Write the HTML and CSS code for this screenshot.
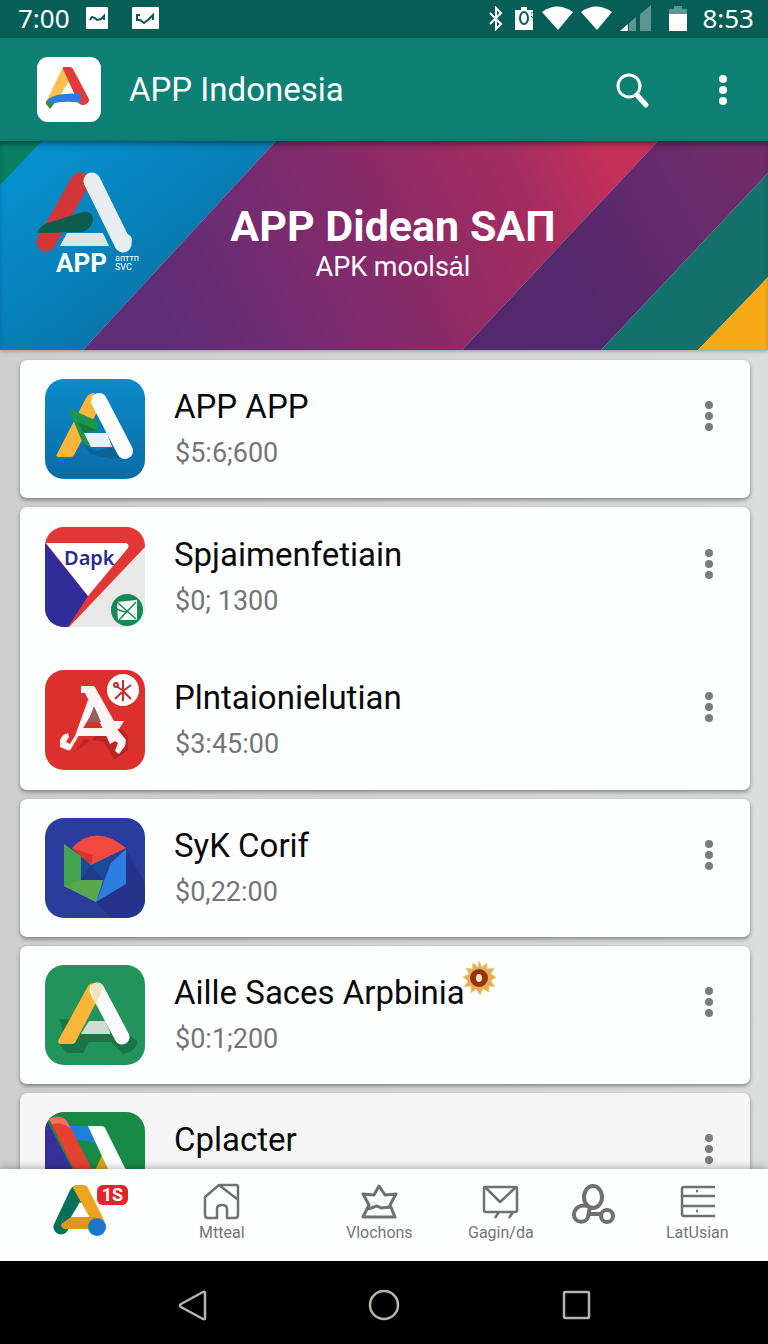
FILE: index.html
```
<!DOCTYPE html>
<html lang="id">
<head>
    <meta charset="UTF-8">
    <meta name="viewport" content="width=device-width, initial-scale=1.0">
    <title>APP Indonesia</title>
    <link rel="stylesheet" href="styles.css">
</head>
<body>
    <div class="phone">
        <div class="status-bar">
            <div class="status-left">
                <span>7:00</span>
                <svg width="22" height="22" viewBox="0 0 22 22"><rect width="22" height="22" rx="1" fill="#fff"/><path d="M4 13l2-3 3 1 2 2 4-1 3-3v4" fill="none" stroke="#075e56" stroke-width="2"/></svg>
                <svg class="status-pic" width="27" height="22" viewBox="0 0 27 22"><rect width="27" height="22" rx="1" fill="#fff"/><path d="M8 8H5v5l3 0 4 3 5-4 4-4v5" fill="none" stroke="#075e56" stroke-width="2"/></svg>
            </div>
            <div class="status-right">
                <svg width="14" height="25" viewBox="0 0 14 25"><path d="M1 7l11 11-5 5V2l5 5L1 18" fill="none" stroke="#fff" stroke-width="2"/></svg>
                <svg class="status-sync" width="20" height="25" viewBox="0 0 20 25"><path d="M0 4h6V1h6v3h6v20H0z" fill="#fff"/><ellipse cx="9" cy="12" rx="4" ry="6" fill="none" stroke="#075e56" stroke-width="2"/><path d="M16 7c3-1 4 0 4 2M16 10l3 3" fill="none" stroke="#075e56" stroke-width="1"/></svg>
                <svg width="31" height="24" viewBox="0 0 31 24"><path d="M0 6Q15-5 31 6L16 24z" fill="#fff"/></svg>
                <svg class="status-wifi" width="31" height="24" viewBox="0 0 31 24"><path d="M0 6Q15-5 31 6L16 24z" fill="#fff"/></svg>
                <svg class="status-signal" width="32" height="26" viewBox="0 0 32 26"><path d="M0 26L8 19v7z" fill="#fff"/><path d="M9 18l7-6v14H9zM20 9L31 0v26H20z" fill="#5c9690"/></svg>
                <svg width="18" height="25" viewBox="0 0 18 25"><path d="M0 3h5V0h8v3h5v5H0z" fill="#5c9690"/><path d="M0 8h18v17H0z" fill="#fff"/></svg>
                <span class="status-time">8:53</span>
            </div>
        </div>

        <header class="app-bar">
            <div class="app-logo">
                <svg width="64" height="65" viewBox="0 0 64 65">
                    <path d="M26 10l6 14-12 20-7 6-4-5z" fill="#fbc04d"/>
                    <path d="M26 10h7q2 0 3 2l16 30c1 5-8 9-11 3L26 12z" fill="#e5393b"/>
                    <path d="M9 44l8-2v5l-4 5-4-5z" fill="#3b8e2e"/>
                    <path d="M10 43q9-8 35-6-3 4-1 9-15-3-31 1z" fill="#2f7bd9"/>
                </svg>
            </div>
            <h1>APP Indonesia</h1>
            <button class="icon-btn search-btn" aria-label="Search">
                <svg width="36" height="38" viewBox="0 0 36 38" fill="none" stroke="#fff" stroke-linecap="round"><circle cx="14" cy="15" r="11" stroke-width="3"/><path d="M22 24l9 10" stroke-width="5"/></svg>
            </button>
            <button class="icon-btn menu-btn" aria-label="More options">
                <svg width="8" height="30" viewBox="0 0 8 30" fill="#fff"><circle cx="4" cy="4" r="4"/><circle cx="4" cy="15" r="4"/><circle cx="4" cy="26" r="4"/></svg>
            </button>
        </header>

        <section class="banner">
            <svg class="banner-bg" viewBox="0 0 768 209" preserveAspectRatio="none">
                <defs>
                    <linearGradient id="bgBlue" x1="0" y1="0" x2="1" y2="1"><stop offset="0" stop-color="#0595d6"/><stop offset="1" stop-color="#0b6693"/></linearGradient>
                    <linearGradient id="bgPink" gradientUnits="userSpaceOnUse" x1="180" y1="200" x2="610" y2="10"><stop offset="0" stop-color="#5f2d78"/><stop offset="0.5" stop-color="#8a2a68"/><stop offset="0.8" stop-color="#a42d60"/><stop offset="1" stop-color="#c5305a"/></linearGradient>
                    <linearGradient id="bgPurple" gradientUnits="userSpaceOnUse" x1="560" y1="130" x2="740" y2="30"><stop offset="0" stop-color="#53286f"/><stop offset="1" stop-color="#702b68"/></linearGradient>
                </defs>
                <path d="M0 0h276L83 209H0z" fill="url(#bgBlue)"/>
                <path d="M0 0h42L0 44z" fill="#087f61"/>
                <path d="M276 0h382L462 209H83z" fill="url(#bgPink)"/>
                <path d="M658 0h110v32L601 209H462z" fill="url(#bgPurple)"/>
                <path d="M768 32v104l-70 73h-97z" fill="#14706a"/>
                <path d="M768 136v73h-70z" fill="#f6aa18"/>
            </svg>
            <div class="banner-logo">
                <svg width="104" height="82" viewBox="0 0 104 82">
                    <path d="M45 10L11 70" stroke="#d23639" stroke-width="19" stroke-linecap="round"/>
                    <path d="M32 61h36l6 13H25z" fill="#dce6ea"/>
                    <path d="M57 9l31 63" stroke="#e7edef" stroke-width="17" stroke-linecap="round"/>
                    <circle cx="91" cy="68" r="6" fill="#e7edef"/>
                    <path d="M2 60q3-6 11-9l35-11c14-2 13 16-1 20L3 61z" fill="#0a5c4b"/>
                </svg>
                <div class="banner-caption"><b>APP</b><small>апттп<br>SVC</small></div>
            </div>
            <div class="banner-text">
                <h2>APP Didean SAП</h2>
                <p>APK moolsȧl</p>
            </div>
        </section>

        <main class="app-list">
            <section class="card">
                <article class="app-row">
                    <svg class="app-icon" viewBox="0 0 100 100">
                        <defs><linearGradient id="g1" x1="0" y1="0" x2="0" y2="1"><stop offset="0" stop-color="#0a8bc9"/><stop offset="1" stop-color="#0a6ca6"/></linearGradient></defs>
                        <rect width="100" height="100" rx="19" fill="url(#g1)"/>
                        <path d="M38 63l12 9 17-4 8 10-8 2-22-5z" fill="#0a6399"/>
                        <path d="M12 75l29-56q3-5 8-5l9 8-29 54q-1 2-4 2H14q-4 0-2-3z" fill="#fbb53a"/>
                        <path d="M23 29l27 12q5 2 3 10l-14 3 8 14q-8-1-11-8l-7-17z" fill="#1f944e"/>
                        <path d="M32 43l20 8-13 3z" fill="#167a3f"/>
                        <path d="M39 54h23l5 14H46z" fill="#e9f0f7"/>
                        <path d="M54 22l26 50" stroke="#fafafa" stroke-width="16" stroke-linecap="round"/>
                    </svg>
                    <div class="app-info">
                        <h3>APP APP</h3>
                        <p>$5:6;600</p>
                    </div>
                    <button class="icon-btn more-btn" aria-label="More"><svg width="8" height="30" viewBox="0 0 8 30"><circle cx="4" cy="4" r="4"/><circle cx="4" cy="15" r="4"/><circle cx="4" cy="26" r="4"/></svg></button>
                </article>
            </section>

            <section class="card card-group">
                <article class="app-row">
                    <svg class="app-icon" viewBox="0 0 100 100">
                        <defs><clipPath id="round"><rect width="100" height="100" rx="19"/></clipPath></defs>
                        <g clip-path="url(#round)">
                            <rect width="100" height="100" fill="#e8e8e8"/>
                            <path d="M0 0h100v20L24 100H0z" fill="#e23735"/>
                            <path d="M0 16l43 53-20 31H0z" fill="#312d98"/>
                            <path d="M1 16h78q6 0 4 5L43 69z" fill="#fff"/>
                        </g>
                        <text x="19" y="38" class="icon-text">Dapk</text>
                        <circle cx="82" cy="83" r="16" fill="#168a50"/>
                        <path d="M72 75l20-2v20H73z" fill="#fff"/>
                        <path d="M72 75l19 17M91 75L74 93M72 82q8 4 11 2" stroke="#168a50" stroke-width="1.5" fill="none"/>
                    </svg>
                    <div class="app-info">
                        <h3>Spjaimenfetiain</h3>
                        <p>$0; 1300</p>
                    </div>
                    <button class="icon-btn more-btn" aria-label="More"><svg width="8" height="30" viewBox="0 0 8 30"><circle cx="4" cy="4" r="4"/><circle cx="4" cy="15" r="4"/><circle cx="4" cy="26" r="4"/></svg></button>
                </article>
                <article class="app-row">
                    <svg class="app-icon" viewBox="0 0 100 100">
                        <rect width="100" height="100" rx="19" fill="#dc302e"/>
                        <path d="M30 82l9-13 20 3 10 18 14-10V66l-5-6-16-2z" fill="#b92625"/>
                        <g fill="#fbf6f5">
                            <path d="M36 16h12q2 0 3 3l18 32h10l-5 8h-2l9 11-1 6-6 8-4-3 3-8-3-2-5 3-5-11-20-40h-4z"/>
                            <path d="M43 30l7 8-20 34-4 7q-1 2-4 1l-7-3v-7l3-5 5-2 1 4-3 5 4 2 5-8z"/>
                            <path d="M36 58h23l3 8H32z"/>
                        </g>
                        <path d="M49 36l7 16H43z" fill="#94605f"/>
                        <circle cx="78" cy="20" r="16" fill="#fff"/>
                        <g stroke="#c92b2e" stroke-width="2" fill="none"><path d="M78 10v21M78 21l8-6M78 21l8 8M77 22l-7 7M77 20l-6-4"/><circle cx="71" cy="15" r="2"/></g>
                    </svg>
                    <div class="app-info">
                        <h3>Plntaionielutian</h3>
                        <p>$3:45:00</p>
                    </div>
                    <button class="icon-btn more-btn" aria-label="More"><svg width="8" height="30" viewBox="0 0 8 30"><circle cx="4" cy="4" r="4"/><circle cx="4" cy="15" r="4"/><circle cx="4" cy="26" r="4"/></svg></button>
                </article>
            </section>

            <section class="card">
                <article class="app-row">
                    <svg class="app-icon" viewBox="0 0 100 100">
                        <rect width="100" height="100" rx="19" fill="#2b3d9c"/>
                        <path d="M81 31l19 34v18Q98 99 81 100H66L50 83z" fill="#25348a"/>
                        <path d="M36 38h30l-8 24H36z" fill="#174c96"/>
                        <path d="M36 62l10-15 12 15z" fill="#1c3d86"/>
                        <path d="M19 26l17 12v24h22l-7 22-32-16z" fill="#43a352"/>
                        <path d="M19 68l17-6h22l-7 22z" fill="#5aa84e"/>
                        <path d="M27 30q23-25 54 0L46 47z" fill="#f2493e"/>
                        <path d="M27 30l21 7-2 10z" fill="#d93432"/>
                        <path d="M81 31v35L51 84l15-39z" fill="#2b7fe0"/>
                    </svg>
                    <div class="app-info">
                        <h3>SyK Corif</h3>
                        <p>$0,22:00</p>
                    </div>
                    <button class="icon-btn more-btn" aria-label="More"><svg width="8" height="30" viewBox="0 0 8 30"><circle cx="4" cy="4" r="4"/><circle cx="4" cy="15" r="4"/><circle cx="4" cy="26" r="4"/></svg></button>
                </article>
            </section>

            <section class="card">
                <article class="app-row">
                    <svg class="app-icon" viewBox="0 0 100 100">
                        <rect width="100" height="100" rx="19" fill="#22935a"/>
                        <path d="M14 54h14l-9 13zM15 80l7 8h16l6-11h22l12 12q14-3 14-13l-10-7-36-6z" fill="#177546"/>
                        <path d="M44 56h16l6 13H36z" fill="#cfdcd6"/>
                        <path d="M14 74l29-53q2-3 5-3l10 6-27 52q-1 3-4 3H16q-4 0-2-5z" fill="#fbb537"/>
                        <path d="M52 25l25 47" stroke="#fafafa" stroke-width="15" stroke-linecap="round"/>
                        <path d="M45 21q3-3 7-3 7 0 6 5l-7 17z" fill="#f1e2c2"/>
                    </svg>
                    <div class="app-info">
                        <h3>Aille Saces Arpbinia
                            <svg class="sun" width="34" height="34" viewBox="0 0 34 34"><path d="M17 0l3 6 5-4v6l7-1-3 6 5 3-5 4 4 6-6-1v6l-6-3-3 6-4-6-5 4v-7l-7 1 4-6-5-4 6-3-3-6 6 1 1-6 5 4z" fill="#e3ae58" stroke="#f3cf8c" stroke-width="1"/><circle cx="17" cy="17" r="9" fill="#98330d"/><ellipse cx="17" cy="17" rx="3" ry="4" fill="#fbe9c0"/></svg>
                        </h3>
                        <p>$0:1;200</p>
                    </div>
                    <button class="icon-btn more-btn" aria-label="More"><svg width="8" height="30" viewBox="0 0 8 30"><circle cx="4" cy="4" r="4"/><circle cx="4" cy="15" r="4"/><circle cx="4" cy="26" r="4"/></svg></button>
                </article>
            </section>

            <section class="card card-last">
                <article class="app-row">
                    <svg class="app-icon" viewBox="0 0 100 100">
                        <g clip-path="url(#round)">
                            <rect width="100" height="100" fill="#178a45"/>
                            <path d="M0 5l50 95H0z" fill="#382f9b"/>
                            <path d="M23 14h20l8 18q-8-4-21-4z" fill="#1c7fdc"/>
                            <path d="M57 43L40 82l28-16z" fill="#dfa41c"/>
                            <path d="M43 14h13q3 0 4 2l42 84H83z" fill="#fff"/>
                            <path d="M4 7q13-6 19 4l46 89H50z" fill="#e8402f"/>
                            <path d="M4 7q13-6 19 4l3 6q-8-7-19-5z" fill="#f0745c"/>
                        </g>
                    </svg>
                    <div class="app-info">
                        <h3>Cplacter</h3>
                    </div>
                    <button class="icon-btn more-btn" aria-label="More"><svg width="8" height="30" viewBox="0 0 8 30"><circle cx="4" cy="4" r="4"/><circle cx="4" cy="15" r="4"/><circle cx="4" cy="26" r="4"/></svg></button>
                </article>
            </section>
        </main>

        <nav class="tab-bar">
            <a href="#" class="tab tab-logo" aria-label="Start">
                <svg width="54" height="54" viewBox="0 0 54 54">
                    <path d="M24 10L8 44" stroke="#08705a" stroke-width="15" stroke-linecap="round"/>
                    <path d="M20 5q0-3 4-3h6q4 0 5 3l17 34-10 5z" fill="#eca51f"/>
                    <path d="M27 19l8 15H18z" fill="#fff"/>
                    <path d="M18 34h25l-8 12H11q-6-4 0-7z" fill="#dd971f"/>
                    <circle cx="44" cy="44" r="9" fill="#1976cc"/>
                </svg>
                <span class="badge">1S</span>
            </a>
            <a href="#" class="tab">
                <svg width="37" height="37" viewBox="0 0 37 37"><path d="M2 14L16 2h17q2 0 2 2v28q0 3-3 3h-8V26q0-4-5-4t-5 4v9H5q-3 0-3-3zM16 2l18 14"/></svg>
                <span>Mtteal</span>
            </a>
            <a href="#" class="tab">
                <svg width="37" height="37" viewBox="0 0 37 37"><path d="M18 3l6 9 11-1-6 11 5 12H2l6-12L2 11l11 1zM7 26l9-3 4 2 9-1" stroke-width="3"/></svg>
                <span>Vlochons</span>
            </a>
            <a href="#" class="tab">
                <svg width="37" height="37" viewBox="0 0 37 37"><path d="M3 4h31q1 0 1 1v22q0 2-2 2H4q-2 0-2-2V5q0-1 1-1zM4 5l14 14L33 5M17 29l-4 6M31 29l-4 6"/></svg>
                <span>Gagin/da</span>
            </a>
            <a href="#" class="tab" aria-label="People">
                <svg width="43" height="41" viewBox="0 0 43 41"><g stroke-width="4"><ellipse cx="21" cy="14" rx="9" ry="11"/><path d="M16 23C8 21 2 25 2 32c0 8 12 9 14 2l2-10"/><circle cx="35" cy="33" r="6"/><path d="M18 31h10"/></g></svg>
            </a>
            <a href="#" class="tab">
                <svg width="37" height="37" viewBox="0 0 37 37"><path d="M36 4H5Q3 4 3 6v25q0 2 2 2h31M3 13h33M3 23h33M17 8h2M17 28h2"/></svg>
                <span>LatUsian</span>
            </a>
        </nav>

        <div class="system-nav">
            <button aria-label="Back"><svg width="32" height="34" viewBox="0 0 32 34"><path d="M27 4q2-1 2 1v25q0 2-2 1L5 19q-2-2 0-3z"/></svg></button>
            <button aria-label="Home"><svg width="32" height="34" viewBox="0 0 32 34"><circle cx="16" cy="17" r="14"/></svg></button>
            <button aria-label="Recent apps"><svg width="32" height="34" viewBox="0 0 32 34"><rect x="4" y="4" width="25" height="26" rx="1"/></svg></button>
        </div>
    </div>
</body>
</html>
```
FILE: styles.css
```
* {
    box-sizing: border-box;
}

body {
    margin: 0;
    font-family: Roboto, "Liberation Sans", sans-serif;
    background: #d8d9d9;
    color: #0a0a0a;
}

h1, h2, h3, p {
    margin: 0;
    font-weight: 400;
}

svg {
    display: block;
    flex-shrink: 0;
}

button {
    padding: 0;
    border: none;
    background: none;
    cursor: pointer;
}

.phone {
    display: flex;
    flex-direction: column;
    height: 100vh;
    overflow: hidden;
}

/* status bar */
.status-bar {
    display: flex;
    justify-content: space-between;
    align-items: center;
    height: 38px;
    padding: 0 14px 2px 18px;
    flex-shrink: 0;
    background: #075e56;
    color: #fff;
    font-family: "Noto Sans", sans-serif;
    font-size: 26px;
    line-height: 36px;
}

.status-left,
.status-right {
    display: flex;
    align-items: center;
}

.status-left {
    gap: 16px;
}

.status-pic {
    margin-left: 8px;
}

.status-sync {
    margin: 0 7px 0 12px;
}

.status-wifi {
    margin: 0 8px;
}

.status-signal {
    margin-right: 17px;
}

.status-time {
    margin-left: 15px;
}

/* app bar */
.app-bar {
    display: flex;
    align-items: center;
    height: 103px;
    padding: 0 24px 0 37px;
    flex-shrink: 0;
    background: #0d8074;
    color: #fff;
}

.app-logo {
    background: #fff;
    border-radius: 11px;
}

.app-bar h1 {
    flex: 1;
    margin-left: 28px;
    font-size: 33px;
    line-height: 40px;
}

.icon-btn {
    display: flex;
    justify-content: center;
    width: 42px;
}

.search-btn {
    margin-right: 48px;
}

/* banner */
.banner {
    position: relative;
    display: flex;
    align-items: center;
    height: 209px;
    padding: 0 35px;
    flex-shrink: 0;
    color: #fff;
    box-shadow: inset 0 5px 6px -3px rgba(0, 0, 0, 0.5), 0 1px 4px rgba(0, 0, 0, 0.3);
}

.banner-bg {
    position: absolute;
    top: 0;
    left: 0;
    width: 100%;
    height: 100%;
    z-index: -1;
}

.banner-logo {
    align-self: flex-start;
    width: 104px;
    padding-top: 31px;
}

.banner-caption {
    display: flex;
    align-items: center;
    gap: 8px;
    margin-left: 21px;
    line-height: 18px;
}

.banner-caption b {
    font-size: 26px;
}

.banner-caption small {
    font-size: 9px;
    line-height: 9px;
}

.banner-text {
    flex: 1;
    margin-right: 86px;
    padding-bottom: 4px;
    text-align: center;
}

.banner-text h2 {
    font-size: 43px;
    font-weight: 700;
    line-height: 46px;
}

.banner-text p {
    font-size: 27px;
    line-height: 36px;
}

/* app list */
.app-list {
    display: flex;
    flex-direction: column;
    flex: 1;
    gap: 9px;
    min-height: 0;
    padding: 10px 18px 0 20px;
    overflow: hidden;
    background: linear-gradient(to right, #cfcfcf, #d6d6d6 50%, #dbdcdc);
}

.card {
    flex-shrink: 0;
    padding: 19px 20px 19px 25px;
    border-radius: 7px;
    background: #fdfefe;
    box-shadow: 0 2px 4px rgba(0, 0, 0, 0.4);
}

.card-group {
    display: flex;
    flex-direction: column;
    gap: 43px;
    padding-top: 20px;
    padding-bottom: 20px;
}

.card-last {
    background: #f5f5f5;
}

.app-row {
    display: flex;
    align-items: flex-start;
}

.app-icon {
    width: 100px;
    height: 100px;
}

.icon-text {
    font-family: "Noto Sans", sans-serif;
    font-size: 20px;
    font-weight: 600;
    fill: #2b2a96;
}

.app-info {
    flex: 1;
    margin-left: 29px;
    padding-top: 8px;
}

.app-info h3 {
    display: flex;
    font-size: 33px;
    line-height: 40px;
}

.app-info p {
    margin: 10px 0 0 1px;
    font-size: 27px;
    line-height: 32px;
    color: #757575;
}

.sun {
    margin: -12px 0 0 -3px;
}

.more-btn {
    margin-top: 22px;
}

.more-btn svg {
    fill: #7c7c7c;
}

/* bottom tabs */
.tab-bar {
    display: grid;
    grid-template-columns: 146fr 147fr 122fr 104fr 94fr 64fr;
    justify-items: start;
    height: 92px;
    padding: 14px 38px 0 53px;
    flex-shrink: 0;
    z-index: 1;
    background: #fdfefe;
    box-shadow: 0 -1px 8px rgba(0, 0, 0, 0.3);
}

.tab {
    display: flex;
    flex-direction: column;
    align-items: center;
    gap: 2px;
    color: #757575;
    font-size: 16px;
    line-height: 22px;
    text-decoration: none;
}

.tab svg {
    fill: none;
    stroke: #707070;
    stroke-width: 2.5;
    stroke-linejoin: round;
}

.tab-logo {
    position: relative;
}

.tab-logo svg {
    stroke: none;
}

.badge {
    position: absolute;
    top: 2px;
    left: 44px;
    width: 31px;
    border-radius: 6px;
    background: #e0262b;
    color: #fff;
    font-size: 18px;
    font-weight: 700;
    line-height: 20px;
    text-align: center;
}

/* system buttons */
.system-nav {
    display: grid;
    grid-template-columns: repeat(3, 1fr);
    place-items: center;
    height: 83px;
    padding: 4px 96px 0;
    flex-shrink: 0;
    background: #000;
}

.system-nav svg {
    fill: none;
    stroke: #b9b3b0;
    stroke-width: 2.5;
}
```
